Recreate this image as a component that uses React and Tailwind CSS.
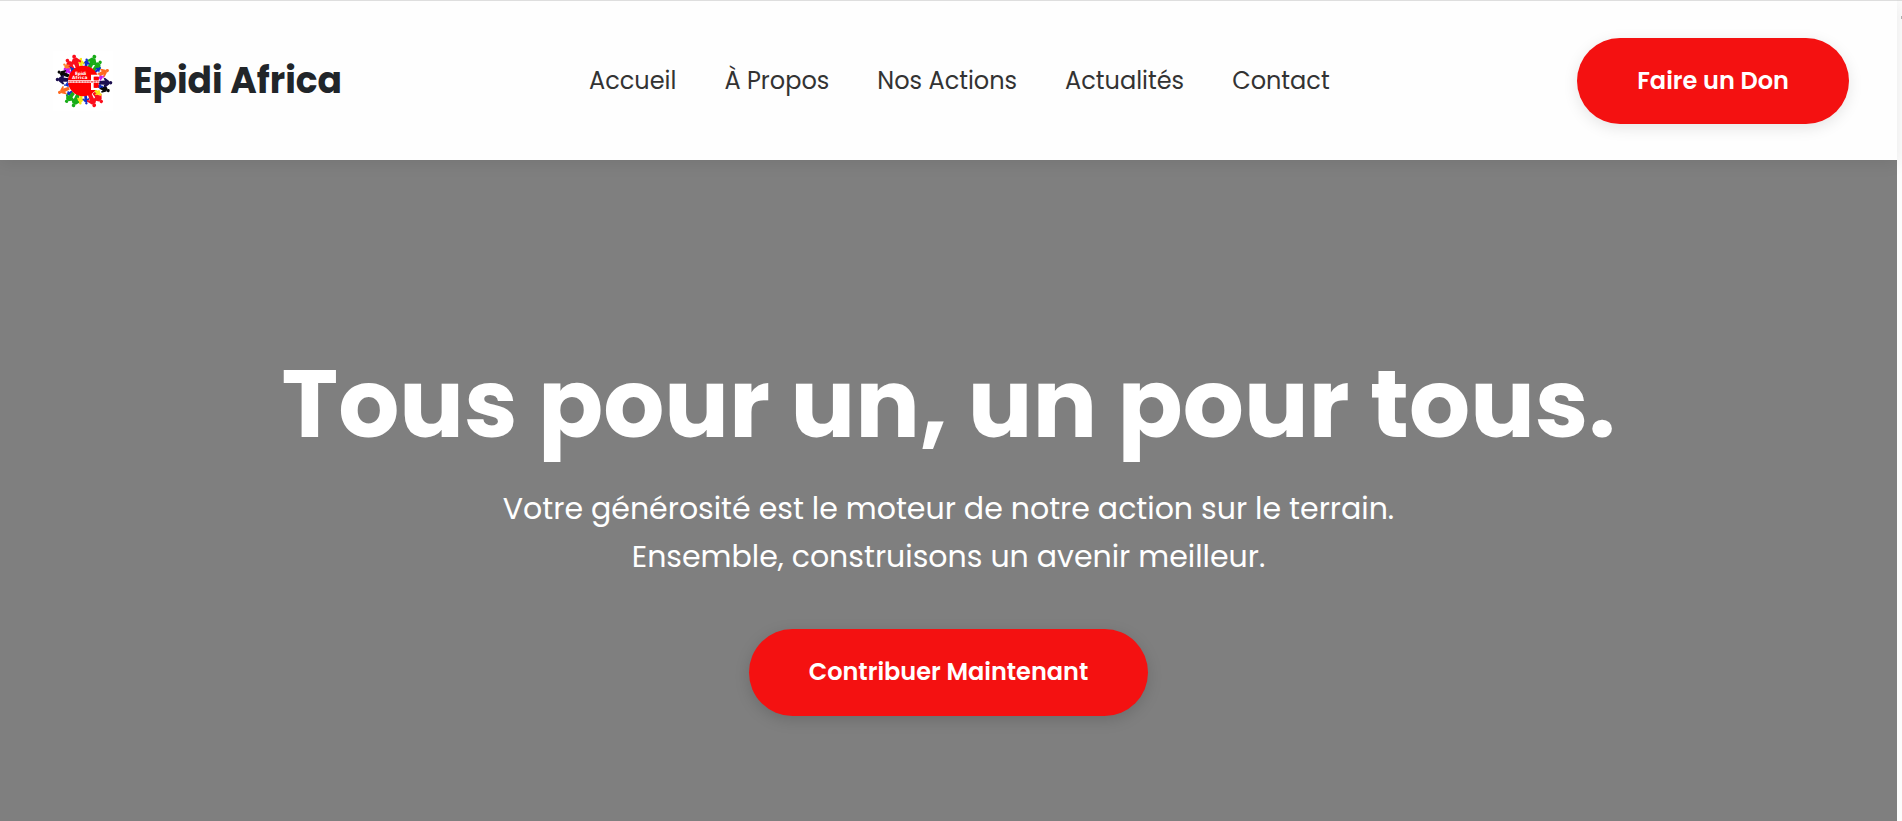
const people = [
  // x, y, angle, scale, colour
  [157, 63, 24, 1.15, "#18ac18"],
  [172, 76, 40, 1, "#18ac18"],
  [139, 68, 6, 0.75, "#1030c8"],
  [123, 67, -4, 0.8, "#f6e616"],
  [107, 63, -18, 1.15, "#fb0d1b"],
  [90, 73, -32, 1.1, "#fb0d1b"],
  [98, 88, -42, 0.6, "#1030c8"],
  [80, 79, -48, 0.7, "#ff7f27"],
  [82, 91, -58, 0.7, "#c81af0"],
  [69, 100, -68, 0.95, "#080808"],
  [66, 118, -88, 1.05, "#1c0f50"],
  [82, 133, -100, 0.55, "#1030c8"],
  [70, 151, -114, 0.95, "#ff6a20"],
  [87, 160, -128, 0.6, "#1030c8"],
  [88, 173, -140, 1, "#18ac18"],
  [106, 182, -158, 1.1, "#18ac18"],
  [122, 178, -174, 0.8, "#f6e616"],
  [138, 179, 174, 0.75, "#1030c8"],
  [157, 181, 158, 1.15, "#fb0d1b"],
  [175, 173, 140, 1.05, "#fb0d1b"],
  [174, 157, 126, 0.7, "#f6e616"],
  [193, 146, 112, 0.95, "#080808"],
  [180, 138, 100, 0.55, "#1030c8"],
  [198, 127, 90, 1.05, "#1c0f50"],
  [181, 111, 76, 0.7, "#c81af0"],
  [191, 96, 64, 0.95, "#ff6a20"],
  [174, 88, 50, 0.6, "#1030c8"],
];

function Logo() {
  return (
    <svg className="size-[60px] shrink-0" viewBox="39 32 180 180" aria-hidden="true">
      <rect x="39" y="32" width="180" height="180" fill="#fff" />
      {people.map(([x, y, angle, scale, color], i) => (
        <g key={i} transform={`translate(${x} ${y}) rotate(${angle}) scale(${scale})`} fill={color}>
          <circle cx="0" cy="-13" r="5" />
          <path d="M-5 -9H5L14 3L12 7L6 3L5 20H-5L-6 3L-12 7L-14 3Z" />
        </g>
      ))}
      <circle cx="130" cy="122" r="46" fill="#fe0000" />
      <path d="M153 103H178V109H161V120H178V128H161V142H178V149H153V128H84V120H153Z" fill="#fff" />
      <path d="M163 109H176V120H163ZM163 128H176V142H163Z" fill="#fe0000" />
      <path d="M85 124.500H176" stroke="#f23838" strokeWidth="4" strokeDasharray="7 1.5" />
      <text x="122" y="103" textAnchor="middle" fill="#fff" fontSize="13" fontWeight="700" fontFamily="DejaVu Sans, sans-serif" textLength="34">Epidi</text>
      <text x="119" y="115" textAnchor="middle" fill="#fff" fontSize="13" fontWeight="700" fontFamily="DejaVu Sans, sans-serif" textLength="46">Africa</text>
    </svg>
  );
}

export default function App() {
  return (
    <div className="flex h-[821px] w-full overflow-hidden bg-[#fcfcfc] font-['Poppins','Inter',sans-serif] whitespace-nowrap">
      <div className="flex w-[1897px] shrink-0 flex-col">
        <header className="relative z-10 flex h-40 shrink-0 items-center border-t border-[#dedede] bg-[#fefefe] pr-12 pl-[53px] shadow-[0_4px_15px_rgba(0,0,0,0.08)]">
          <a className="flex w-[536px] items-center gap-5">
            <Logo />
            <span className="pt-px text-4xl font-bold text-[#212529]">Epidi Africa</span>
          </a>
          <nav className="flex gap-12 text-2xl text-[#333333]">
            <a>Accueil</a>
            <a>À Propos</a>
            <a>Nos Actions</a>
            <a>Actualités</a>
            <a>Contact</a>
          </nav>
          <button className="ml-auto flex h-[86px] w-[272px] items-center justify-center rounded-full bg-[#f41111] text-2xl font-semibold text-white shadow-[0_4px_15px_rgba(0,0,0,0.1)]">
            Faire un Don
          </button>
        </header>
        <main className="flex flex-1 flex-col items-center bg-[#7f7f7f] pt-[186px] text-white">
          <h1 className="text-8xl leading-[116px] font-bold">Tous pour un, un pour tous.</h1>
          <div className="mt-[23px] text-center text-3xl leading-12">
            <p>Votre générosité est le moteur de notre action sur le terrain.</p>
            <p>Ensemble, construisons un avenir meilleur.</p>
          </div>
          <button className="mt-12 flex h-[87px] w-[399px] items-center justify-center rounded-full bg-[#f41111] pb-px text-2xl font-semibold shadow-[0_4px_15px_rgba(0,0,0,0.15)]">
            Contribuer Maintenant
          </button>
        </main>
      </div>
      <div className="flex flex-1 justify-end border-t border-[#dedede] pt-[15px]">
        <span className="h-[3px] w-px bg-[#b5b5b5]" />
      </div>
    </div>
  );
}
